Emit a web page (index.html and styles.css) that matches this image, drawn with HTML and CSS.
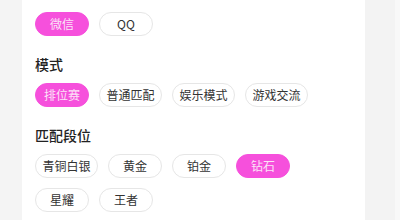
FILE: index.html
```html
<!DOCTYPE html>
<html lang="zh-CN">
<head>
    <meta charset="UTF-8">
    <meta name="viewport" content="width=device-width, initial-scale=1.0">
    <title>匹配设置</title>
    <link rel="stylesheet" href="styles.css">
</head>
<body>
    <div class="layout">
        <div class="side-left"></div>

        <div class="panel">
            <div class="chip-group">
                <span class="chip active">微信</span>
                <span class="chip">QQ</span>
            </div>

            <div class="section">
                <h3>模式</h3>
                <div class="chip-group">
                    <span class="chip active">排位赛</span>
                    <span class="chip">普通匹配</span>
                    <span class="chip">娱乐模式</span>
                    <span class="chip">游戏交流</span>
                </div>
            </div>

            <div class="section">
                <h3>匹配段位</h3>
                <div class="chip-group">
                    <span class="chip">青铜白银</span>
                    <span class="chip">黄金</span>
                    <span class="chip">铂金</span>
                    <span class="chip active">钻石</span>
                    <span class="chip">星耀</span>
                    <span class="chip">王者</span>
                </div>
            </div>
        </div>

        <div class="side-right"></div>
    </div>
</body>
</html>
```

FILE: styles.css
```css
:root {
    --pink: #f650dc;
    --page-bg: #f4f4f4;
    --text-primary: #222222;
    --text-chip: #333333;
    --chip-border: #e6e6e6;
}

* {
    margin: 0;
    padding: 0;
    box-sizing: border-box;
}

body {
    font-family: "Noto Sans CJK SC", "Noto Sans", sans-serif;
    background: var(--page-bg);
    color: var(--text-primary);
    width: 400px;
    height: 220px;
    overflow: hidden;
}

.layout {
    display: flex;
    height: 220px;
}

.side-left {
    width: 22px;
    background: var(--page-bg);
}

.panel {
    width: 343px;
    background: #ffffff;
    padding: 12px 13px 0;
}

.side-right {
    width: 30px;
    background: #f3f3f3;
    border-right: 5px solid #f8f8f8;
    box-sizing: content-box;
}

.section {
    margin-top: 18px;
}

.section h3 {
    font-size: 14px;
    line-height: 20px;
    font-weight: 500;
    color: var(--text-primary);
    margin-bottom: 9px;
}

.chip-group {
    display: flex;
    flex-wrap: wrap;
    gap: 10px;
}

.chip {
    min-width: 54px;
    height: 24px;
    padding: 0 6.5px;
    border: 1px solid var(--chip-border);
    border-radius: 12px;
    font-size: 12px;
    line-height: 22px;
    color: var(--text-chip);
    text-align: center;
    background: #ffffff;
}

.chip.active {
    background: var(--pink);
    border-color: var(--pink);
    color: #fbe3f7;
}
```
